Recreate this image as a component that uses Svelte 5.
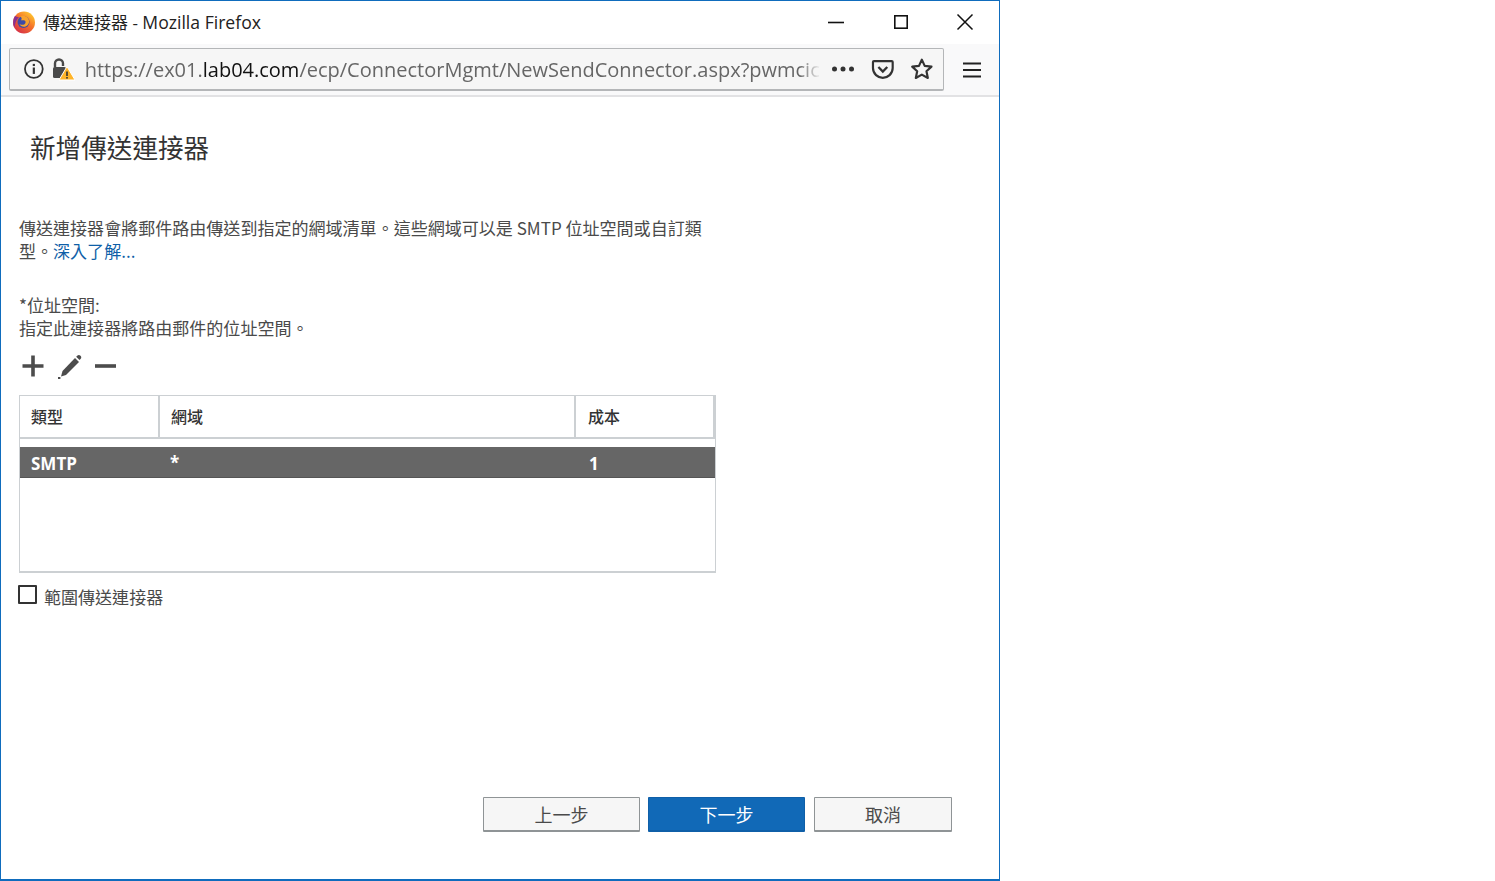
<script>
  const columns = [
    { key: 'type', label: '類型', value: 'SMTP' },
    { key: 'domain', label: '網域', value: '*' },
    { key: 'cost', label: '成本', value: '1' }
  ];
</script>

<div class="window">
  <header class="titlebar">
    <svg class="fx" viewBox="0 0 24 24" width="24" height="24" aria-hidden="true">
      <defs>
        <linearGradient id="fxg" x1="0.85" y1="0.05" x2="0.15" y2="0.95">
          <stop offset="0" stop-color="#ffcb2e"/>
          <stop offset="0.45" stop-color="#f5722a"/>
          <stop offset="1" stop-color="#d42c4a"/>
        </linearGradient>
      </defs>
      <circle cx="12" cy="12.500" r="11" fill="url(#fxg)"/>
      <path d="M3 6c-2 3-2.500 8-.5 11.500C3 14 4 10 7 7 5 7 4 6.500 3 6z" fill="#8a2f8f"/>
      <circle cx="11.500" cy="12" r="6" fill="#3d4ba6"/>
      <path d="M8 6.500c3-1.500 7-.5 8.500 2.500 1.500 3 0 6.500-3 7.500-2.500.8-5-.2-6-2.500 1.500 1 3.500 1.200 5 .2 1.200-.8 1.500-2.500.5-3.500-1-.8-2.500-.5-4-.5 1-1 1-2.500-1-4.200z" fill="#f8a22c"/>
    </svg>
    <span class="wintitle">傳送連接器 - <span class="lat">Mozilla Firefox</span></span>
    <div class="winctl">
      <svg viewBox="0 0 18 18" width="18" height="18" aria-hidden="true"><path d="M1 9.500h16" stroke="#111" stroke-width="1.600"/></svg>
      <svg viewBox="0 0 18 18" width="18" height="18" aria-hidden="true"><rect x="2.800" y="2.800" width="12.400" height="12.400" fill="none" stroke="#111" stroke-width="1.600"/></svg>
      <svg viewBox="0 0 18 18" width="18" height="18" aria-hidden="true"><path d="M1.500 1.500l15 15M16.500 1.500l-15 15" stroke="#111" stroke-width="1.500"/></svg>
    </div>
  </header>

  <div class="toolbar">
    <div class="urlbar">
      <svg viewBox="0 0 22 22" width="22" height="22" aria-hidden="true">
        <circle cx="11" cy="11" r="9" fill="none" stroke="#333" stroke-width="1.800"/>
        <rect x="9.900" y="9.500" width="2.200" height="6.500" fill="#333"/>
        <rect x="9.900" y="5.800" width="2.200" height="2.200" fill="#333"/>
      </svg>
      <svg class="lock" viewBox="0 0 24 24" width="24" height="24" aria-hidden="true">
        <path d="M4 10V6.500a4 4 0 0 1 8 0V9" fill="none" stroke="#4a4a4a" stroke-width="2.400"/>
        <rect x="2" y="10" width="13" height="11" rx="1.500" fill="#4a4a4a"/>
        <path d="M16 9.500l8 13.500H8z" fill="#ffb428" stroke="#fff" stroke-width="1"/>
        <rect x="15.200" y="14.500" width="1.600" height="4.500" fill="#333"/>
        <rect x="15.200" y="20" width="1.600" height="1.600" fill="#333"/>
      </svg>
      <span class="url"><span class="dim">https://ex01.</span><span class="host">lab04.com</span><span class="dim">/ecp/ConnectorMgmt/NewSendConnector.aspx?pwmcic</span></span>
      <svg class="more" viewBox="0 0 24 8" width="24" height="8" aria-hidden="true">
        <circle cx="3.500" cy="4" r="2.500" fill="#333"/><circle cx="12" cy="4" r="2.500" fill="#333"/><circle cx="20.500" cy="4" r="2.500" fill="#333"/>
      </svg>
      <svg viewBox="0 0 24 24" width="24" height="24" aria-hidden="true">
        <path d="M3 4h18a1 1 0 0 1 1 1v6c0 6-5 10-10 10S2 17 2 11V5a1 1 0 0 1 1-1z" fill="none" stroke="#333" stroke-width="2.200"/>
        <path d="M7.500 10l4.500 4.500 4.500-4.500" fill="none" stroke="#333" stroke-width="2.400"/>
      </svg>
      <svg viewBox="0 0 24 24" width="24" height="24" aria-hidden="true">
        <path d="M12 2.500l2.900 6.300 6.900.8-5.100 4.700 1.400 6.800-6.100-3.400-6.100 3.400 1.400-6.800-5.100-4.700 6.900-.8z" fill="none" stroke="#333" stroke-width="2.200" stroke-linejoin="round"/>
      </svg>
    </div>
    <svg class="menu" viewBox="0 0 18 18" width="18" height="18" aria-hidden="true"><path d="M0 2.500h18M0 9h18M0 15.500h18" stroke="#222" stroke-width="2.200"/></svg>
  </div>

  <main class="content">
    <h1>新增傳送連接器</h1>
    <p class="desc">傳送連接器會將郵件路由傳送到指定的網域清單。這些網域可以是 SMTP 位址空間或自訂類<br/>型。<a href="#learn">深入了解...</a></p>
    <p class="field">*位址空間:<br/>指定此連接器將路由郵件的位址空間。</p>

    <div class="actions">
      <svg viewBox="0 0 24 24" width="24" height="24" aria-hidden="true"><path d="M12 1.500v21M1.500 12h21" stroke="#4c4c4c" stroke-width="3.600"/></svg>
      <svg viewBox="0 0 26 26" width="26" height="26" aria-hidden="true">
        <path d="M19 5l4 4L10 22l-5 1.500L6.500 18z" fill="#4c4c4c"/>
        <path d="M20.200 3.800l1-1a2.400 2.400 0 0 1 3.300 0 2.400 2.400 0 0 1 0 3.300l-1 1z" fill="#4c4c4c"/>
        <rect x="2" y="24" width="2.400" height="2" fill="#4c4c4c"/>
      </svg>
      <svg class="minus" viewBox="0 0 21 24" width="21" height="24" aria-hidden="true"><path d="M0 12h21" stroke="#4c4c4c" stroke-width="3.600"/></svg>
    </div>

    <div class="grid">
      <div class="thead">
        {#each columns as c}<div class="th {c.key}">{c.label}</div>{/each}
      </div>
      <div class="row">
        {#each columns as c}<div class="td {c.key}">{c.value}</div>{/each}
      </div>
    </div>

    <label class="scope"><span class="box"></span><span>範圍傳送連接器</span></label>

    <footer class="buttons">
      <button class="btn back">上一步</button>
      <button class="btn next">下一步</button>
      <button class="btn cancel">取消</button>
    </footer>
  </main>
</div>

<style>
  :global(body) {
    margin: 0;
    background: #fff;
  }
  .window {
    box-sizing: border-box;
    width: 1000px;
    height: 881px;
    border: 1px solid #0f6cbd;
    border-bottom-width: 2px;
    display: flex;
    flex-direction: column;
    background: #fff;
    font-family: "Noto Sans CJK TC", "Noto Sans", sans-serif;
    overflow: hidden;
  }
  .titlebar {
    height: 43px;
    flex: none;
    display: flex;
    align-items: center;
    padding-left: 11px;
    padding-bottom: 2px;
    box-sizing: border-box;
  }
  .wintitle {
    margin-left: 7px;
    font-size: 17px;
    color: #222;
    font-family: "Open Sans", "Noto Sans CJK TC", sans-serif;
  }
  .lat { font-size: 17.600px; }
  .winctl {
    margin-left: auto;
    display: flex;
    gap: 46.500px;
    margin-right: 25px;
  }
  .toolbar {
    height: 53px;
    flex: none;
    box-sizing: border-box;
    background: #f9f9fa;
    border-bottom: 2px solid #e2e2e4;
    display: flex;
    align-items: center;
    padding: 0 18px 0 8px;
  }
  .urlbar {
    box-sizing: border-box;
    width: 935px;
    height: 43px;
    border: 1px solid #b4b6b8;
    border-bottom-width: 2px;
    border-radius: 2px;
    background: #f6f6f6;
    display: flex;
    align-items: center;
    padding: 0 9px 0 13px;
  }
  .lock { margin-left: 6px; flex: none; }
  .url {
    margin-left: 10px;
    width: 736px;
    flex: none;
    overflow: hidden;
    white-space: nowrap;
    font-family: "Open Sans", sans-serif;
    font-size: 20px;
    letter-spacing: 0;
    -webkit-mask-image: linear-gradient(to right, #000 97%, transparent);
    mask-image: linear-gradient(to right, #000 97%, transparent);
  }
  .dim { color: #666; }
  .host { color: #111; }
  .more { margin-left: 10px; flex: none; }
  .urlbar svg:nth-last-child(2) { margin-left: 16px; }
  .urlbar svg:last-child { margin-left: 16px; }
  .menu { margin-left: auto; }
  .content {
    flex: 1;
    display: flex;
    flex-direction: column;
    padding: 0 0 0 18px;
    min-height: 0;
    color: #4a4a4a;
    font-size: 17.050px;
    line-height: 23px;
  }
  h1 {
    margin: 30px 0 0 11px;
    font-size: 25.600px;
    line-height: 40px;
    font-weight: 400;
    color: #333;
  }
  .desc {
    margin: 49px 0 0;
    width: 700px;
  }
  a { color: #0f5fa8; text-decoration: none; }
  .field {
    margin: 31px 0 0;
  }
  .actions {
    margin: 12px 0 0 2px;
    height: 30px;
    display: flex;
    align-items: center;
    gap: 11px;
  }
  .minus { margin-left: 2px; }
  .grid {
    box-sizing: border-box;
    margin-top: 14px;
    width: 697px;
    height: 178px;
    border: 2px solid #ccd0d3;
    border-width: 1px 1px 2px 1px;
  }
  .thead {
    display: flex;
    height: 43px;
    box-sizing: border-box;
    border-bottom: 2px solid #ccd0d3;
  }
  .th {
    box-sizing: border-box;
    padding-left: 11px;
    line-height: 40px;
    font-size: 16px;
    font-weight: 500;
    color: #333;
    border-right: 2px solid #ccd0d3;
  }
  .th:last-child { border-right: 2px solid #ccd0d3; }
  .type { width: 140px; }
  .domain { width: 416px; }
  .cost { flex: 1; padding-left: 12px; }
  .row {
    display: flex;
    margin-top: 8px;
    height: 31px;
    background: #666;
    border-bottom: 1px solid #555;
    box-sizing: border-box;
  }
  .td {
    box-sizing: border-box;
    padding-left: 11px;
    color: #fff;
    font-family: "Open Sans", sans-serif;
    font-weight: 700;
    font-size: 17px;
    line-height: 33px;
  }
  .td.domain { padding-left: 10px; line-height: 31px; }
  .td.cost { padding-left: 13px; }
  .scope {
    margin: 12px 0 0 -1px;
    display: flex;
    align-items: flex-start;
    gap: 7px;
    color: #4a4a4a;
    height: 24px;
  }
  .box {
    box-sizing: border-box;
    width: 19px;
    height: 19px;
    border: 2px solid #333;
    border-radius: 1px;
    background: #fff;
  }
  .scope span:last-child { line-height: 24px; }
  .buttons {
    margin-top: auto;
    display: flex;
    margin-left: 464px;
    gap: 8px;
    margin-bottom: 47px;
  }
  .btn {
    box-sizing: border-box;
    height: 35px;
    width: 157px;
    padding: 0;
    font-family: inherit;
    font-size: 18px;
    color: #4a4a4a;
    background: #f6f6f6;
    border: 1px solid #8f9496;
    border-bottom-width: 2px;
    border-radius: 1px;
  }
  .next {
    background: #1169b7;
    border-color: #0f5fa8;
    color: #fff;
  }
  .cancel { width: 138px; margin-left: 1px; }
</style>
